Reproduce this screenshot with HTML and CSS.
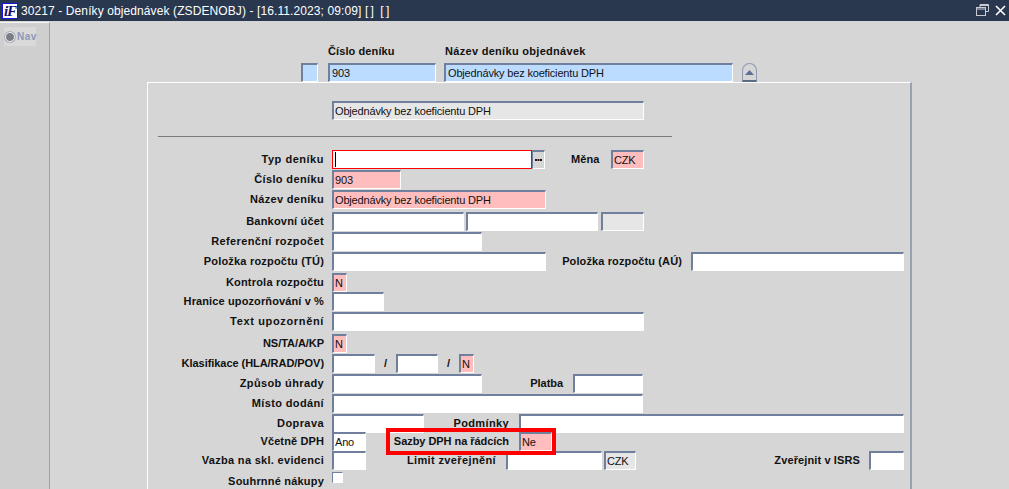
FILE: index.html
```html
<!DOCTYPE html>
<html lang="cs">
<head>
<meta charset="utf-8">
<title>30217 - Deníky objednávek</title>
<link rel="stylesheet" href="styles.css">
</head>
<body>
<header class="titlebar">
  <span class="logo"><span class="logo-text">iF</span></span>
  <span class="title">30217 - Deníky objednávek (ZSDENOBJ) - [16.11.2023; 09:09] <span class="tight">[ ]</span>&nbsp; <span class="tight">[ ]</span></span>
  <span class="win-btn">
    <svg width="13" height="13" viewBox="0 0 13 13"><path d="M4 3.5V.5h8.5v7H9.500" fill="none" stroke="#c8ccd2"/><path d="M4 1.500h8" stroke="#c8ccd2"/><rect x=".5" y="3.5" width="9" height="8" fill="none" stroke="#c8ccd2"/><path d="M1 5h8" stroke="#c8ccd2"/></svg>
  </span>
  <span class="win-btn close">
    <svg width="11" height="11" viewBox="0 0 11 11"><path d="M1 1l9 9M10 1l-9 9" stroke="#fff" stroke-width="1.6"/></svg>
  </span>
</header>
<div class="app">
  <aside class="sidebar">
    <div class="nav"><span class="radio"></span><span>Nav</span></div>
  </aside>
  <main class="canvas">
    <div class="head-labels">
      <span class="lbl-number">Číslo deníku</span>
      <span class="sp2">Název deníku objednávek</span>
    </div>
    <div class="head-fields">
      <span class="field blue w17"></span>
      <span class="field blue w108 s10 pad2">903</span>
      <span class="field blue w289 s8 pad2">Objednávky bez koeficientu DPH</span>
      <span class="collapse"><svg width="9" height="5" viewBox="0 0 9 5"><path d="M4.500 0L9 5H0z" fill="#5c7096"/></svg></span>
    </div>
    <section class="panel">
      <div class="field ro subtitle">Objednávky bez koeficientu DPH</div>
      <hr class="divider">
      <div class="rows">
        <div class="row">
          <label class="sp5">Typ deníku</label>
          <span class="field w200 error"><span class="caret"></span></span>
          <span class="dots"><svg width="7" height="2" viewBox="0 0 7 2"><path d="M0 0h2v2H0zM2.500 0h2v2h-2zM5 0h2v2H5z" fill="#2a1010"/></svg></span>
          <label class="lbl-mena">Měna</label>
          <span class="field pink w33">CZK</span>
        </div>
        <div class="row"><label class="sp3">Číslo deníku</label><span class="field pink w69">903</span></div>
        <div class="row"><label class="sp2">Název deníku</label><span class="field pink w214">Objednávky bez koeficientu DPH</span></div>
        <div class="row"><label class="sp1">Bankovní účet</label><span class="field w132"></span><span class="field w132 s2"></span><span class="field ro w43 s3"></span></div>
        <div class="row"><label class="sp3">Referenční rozpočet</label><span class="field w150"></span></div>
        <div class="row"><label class="sp1">Položka rozpočtu (TÚ)</label><span class="field w214"></span><label class="lbl-au">Položka rozpočtu (AÚ)</label><span class="field w213"></span></div>
        <div class="row"><label class="sp1">Kontrola rozpočtu</label><span class="field pink w15">N</span></div>
        <div class="row"><label>Hranice upozorňování v %</label><span class="field w52"></span></div>
        <div class="row"><label class="sp6">Text upozornění</label><span class="field w312"></span></div>
        <div class="row"><label class="sp0">NS/TA/A/KP</label><span class="field pink w15">N</span></div>
        <div class="row">
          <label class="sp0">Klasifikace (HLA/RAD/POV)</label>
          <span class="field w43"></span><span class="slash">/</span>
          <span class="field w42"></span><span class="slash">/</span>
          <span class="field pink w15">N</span>
        </div>
        <div class="row"><label class="sp3">Způsob úhrady</label><span class="field w150"></span><label class="lbl-platba sp0">Platba</label><span class="field w70"></span></div>
        <div class="row"><label class="sp3">Místo dodání</label><span class="field w311"></span></div>
        <div class="row"><label class="sp4">Doprava</label><span class="field w92"></span><label class="lbl-podminky sp3">Podmínky</label><span class="field w385"></span></div>
        <div class="row"><label>Včetně DPH</label><span class="field w34">Ano</span><label class="lbl-sazby sp0">Sazby DPH na řádcích</label><span class="field pink w33">Ne</span></div>
        <div class="row"><label class="sp2">Vazba na skl. evidenci</label><span class="field w34"></span><label class="lbl-limit sp3">Limit zveřejnění</label><span class="field w96"></span><span class="field ro w32 s2">CZK</span><label class="lbl-isrs">Zveřejnit v ISRS</label><span class="field w35"></span></div>
        <div class="row"><label class="sp1">Souhrnné nákupy</label><span class="check"></span></div>
      </div>
      <div class="highlight"></div>
    </section>
  </main>
</div>
</body>
</html>
```
FILE: styles.css
```css
* { box-sizing: border-box; }
html, body { margin: 0; height: 100%; overflow: hidden; }
body { width: 1009px; height: 489px; background: #d6d6d6; font-family: "Liberation Sans", Arial, sans-serif; font-size: 11px; color: #111; }

.titlebar { height: 21px; background: #29374f; color: #fff; display: flex; align-items: center; padding-left: 2px; }
.logo { width: 16px; height: 16px; background: #fff; border: 1px solid #1616e0; display: flex; align-items: center; justify-content: center; flex: none; }
.logo-text { font: italic bold 15px/14px "Liberation Serif", serif; color: #101070; letter-spacing: -1px; }
.title { margin-left: 3px; font-size: 12px; letter-spacing: .1px; flex: 1; white-space: nowrap; }
.tight { letter-spacing: -.5px; }
.win-btn { display: flex; width: 13px; height: 13px; margin-right: 6px; flex: none; }
.win-btn.close { width: 11px; margin-right: 3px; align-items: center; }

.app { display: flex; height: 468px; }
.sidebar { width: 50px; flex: none; background: #cfcfcf; border-top: 1px solid #f4f4f4; border-right: 1px solid #98a2b0; padding: 4px 0 0 4px; margin-top: 1px; }
.nav { width: 32px; height: 19px; background: #d9d9d9; display: flex; align-items: center; gap: 2px; color: #8d99b5; font-weight: bold; font-size: 10px; letter-spacing: .5px; }
.radio { width: 10px; height: 10px; border-radius: 50%; background: #7b7f85; border: 1px solid #eee; box-shadow: 0 0 0 1px #a8b0bc; flex: none; margin-left: 1px; }

.canvas { flex: 1; min-width: 0; padding-top: 24px; }
.head-labels { display: flex; height: 18px; padding-left: 278px; font-weight: bold; font-size: 11px; letter-spacing: .1px; line-height: 13px; align-items: flex-start; }
.lbl-number { width: 117px; white-space: nowrap; }
.head-fields { display: flex; height: 19px; padding-left: 251px; }

.field { display: block; height: 19px; flex: none; background: #fff; border: solid; border-width: 2px 1px 1px 2px; border-color: #6f7f9c #fff #fff #6f7f9c; font-size: 11px; line-height: 16px; padding-left: 1px; white-space: nowrap; overflow: hidden; color: #111; letter-spacing: -.17px; }
.field.pad2 { padding-left: 2px; }
.field.blue { background: #bcdcff; }
.field.pink { background: #ffbdbd; }
.field.ro { background: #e6e6e6; }
.field.error { border: 1px solid #f00; padding-left: 2px; }
.caret { display: block; width: 1px; height: 15px; background: #000; margin-top: 1px; }

.w15 { width: 15px; } .w17 { width: 17px; } .w32 { width: 32px; } .w33 { width: 33px; } .w34 { width: 34px; } .w35 { width: 35px; }
.w42 { width: 42px; } .w43 { width: 43px; } .w52 { width: 52px; } .w69 { width: 69px; } .w70 { width: 70px; } .w92 { width: 92px; }
.w96 { width: 96px; } .w108 { width: 108px; } .w132 { width: 132px; } .w150 { width: 150px; } .w200 { width: 200px; }
.w213 { width: 213px; } .w214 { width: 214px; } .w289 { width: 289px; } .w311 { width: 311px; } .w312 { width: 312px; } .w385 { width: 385px; }
.s2 { margin-left: 2px; } .s3 { margin-left: 3px; } .s8 { margin-left: 8px; } .s10 { margin-left: 10px; }

.collapse { width: 15px; height: 19px; margin-left: 9px; border: 1px solid #8f9bb0; border-bottom: 2px solid #5c6a84; border-radius: 8px 8px 0 0; display: flex; align-items: center; justify-content: center; flex: none; }

.panel { position: relative; width: 765px; height: 407px; margin-left: 97px; border-top: 1px solid #fff; border-left: 1px solid #fff; border-right: 2px solid #98a2b0; padding-top: 18px; }
.subtitle { width: 312px; margin-left: 184px; }
.divider { width: 514px; height: 1px; margin: 16px 0 0 10px; border: 0; background: #7a7a7a; }
.rows { display: grid; margin-top: 13px; grid-template-rows: 20px 20px 22px 20px 20px 21px 19px 20px 22px 20px 20px 20px 20px 18px 19px 21px 15px; }
.row { display: flex; align-items: flex-start; min-width: 0; }
.row label { font-weight: bold; font-size: 11px; letter-spacing: .12px; white-space: nowrap; line-height: 19px; flex: none; }
.row > label:first-child { width: 176px; text-align: right; margin-right: 8px; }
.row label.sp0 { letter-spacing: -.05px; }
.row label.sp1 { letter-spacing: .2px; }
.row label.sp2, .head-labels .sp2 { letter-spacing: .3px; }
.row label.sp3 { letter-spacing: .37px; }
.row label.sp4 { letter-spacing: .42px; }
.row label.sp5 { letter-spacing: .52px; }
.row label.sp6 { letter-spacing: .65px; }
.dots { width: 13px; height: 19px; display: flex; align-items: center; justify-content: center; background: #d6d6d6; border: solid; border-width: 2px 1px 1px 1px; border-color: #6f7f9c #fff #fff #6f7f9c; flex: none; }
.row .lbl-mena { margin-left: 26px; margin-right: 10px; width: 30px; }
.row .lbl-au { width: 136px; text-align: right; margin-right: 9px; }
.row .lbl-platba { width: 81px; text-align: right; margin-right: 10px; }
.row .lbl-podminky { width: 85px; text-align: right; margin-right: 10px; }
.row .lbl-sazby { width: 143px; text-align: right; margin-right: 10px; }
.row .lbl-limit { width: 130px; text-align: right; margin-right: 10px; }
.row .lbl-isrs { width: 224px; text-align: right; margin-right: 9px; }
.slash { width: 21px; text-align: center; font-weight: bold; line-height: 19px; flex: none; }
.check { width: 11px; height: 11px; background: #fff; border: 1px solid #6f7f9c; border-right-color: #fff; border-bottom-color: #fff; flex: none; }
.highlight { position: absolute; left: 238px; top: 345px; width: 170px; height: 27px; border: 4px solid #f00; pointer-events: none; }
```
